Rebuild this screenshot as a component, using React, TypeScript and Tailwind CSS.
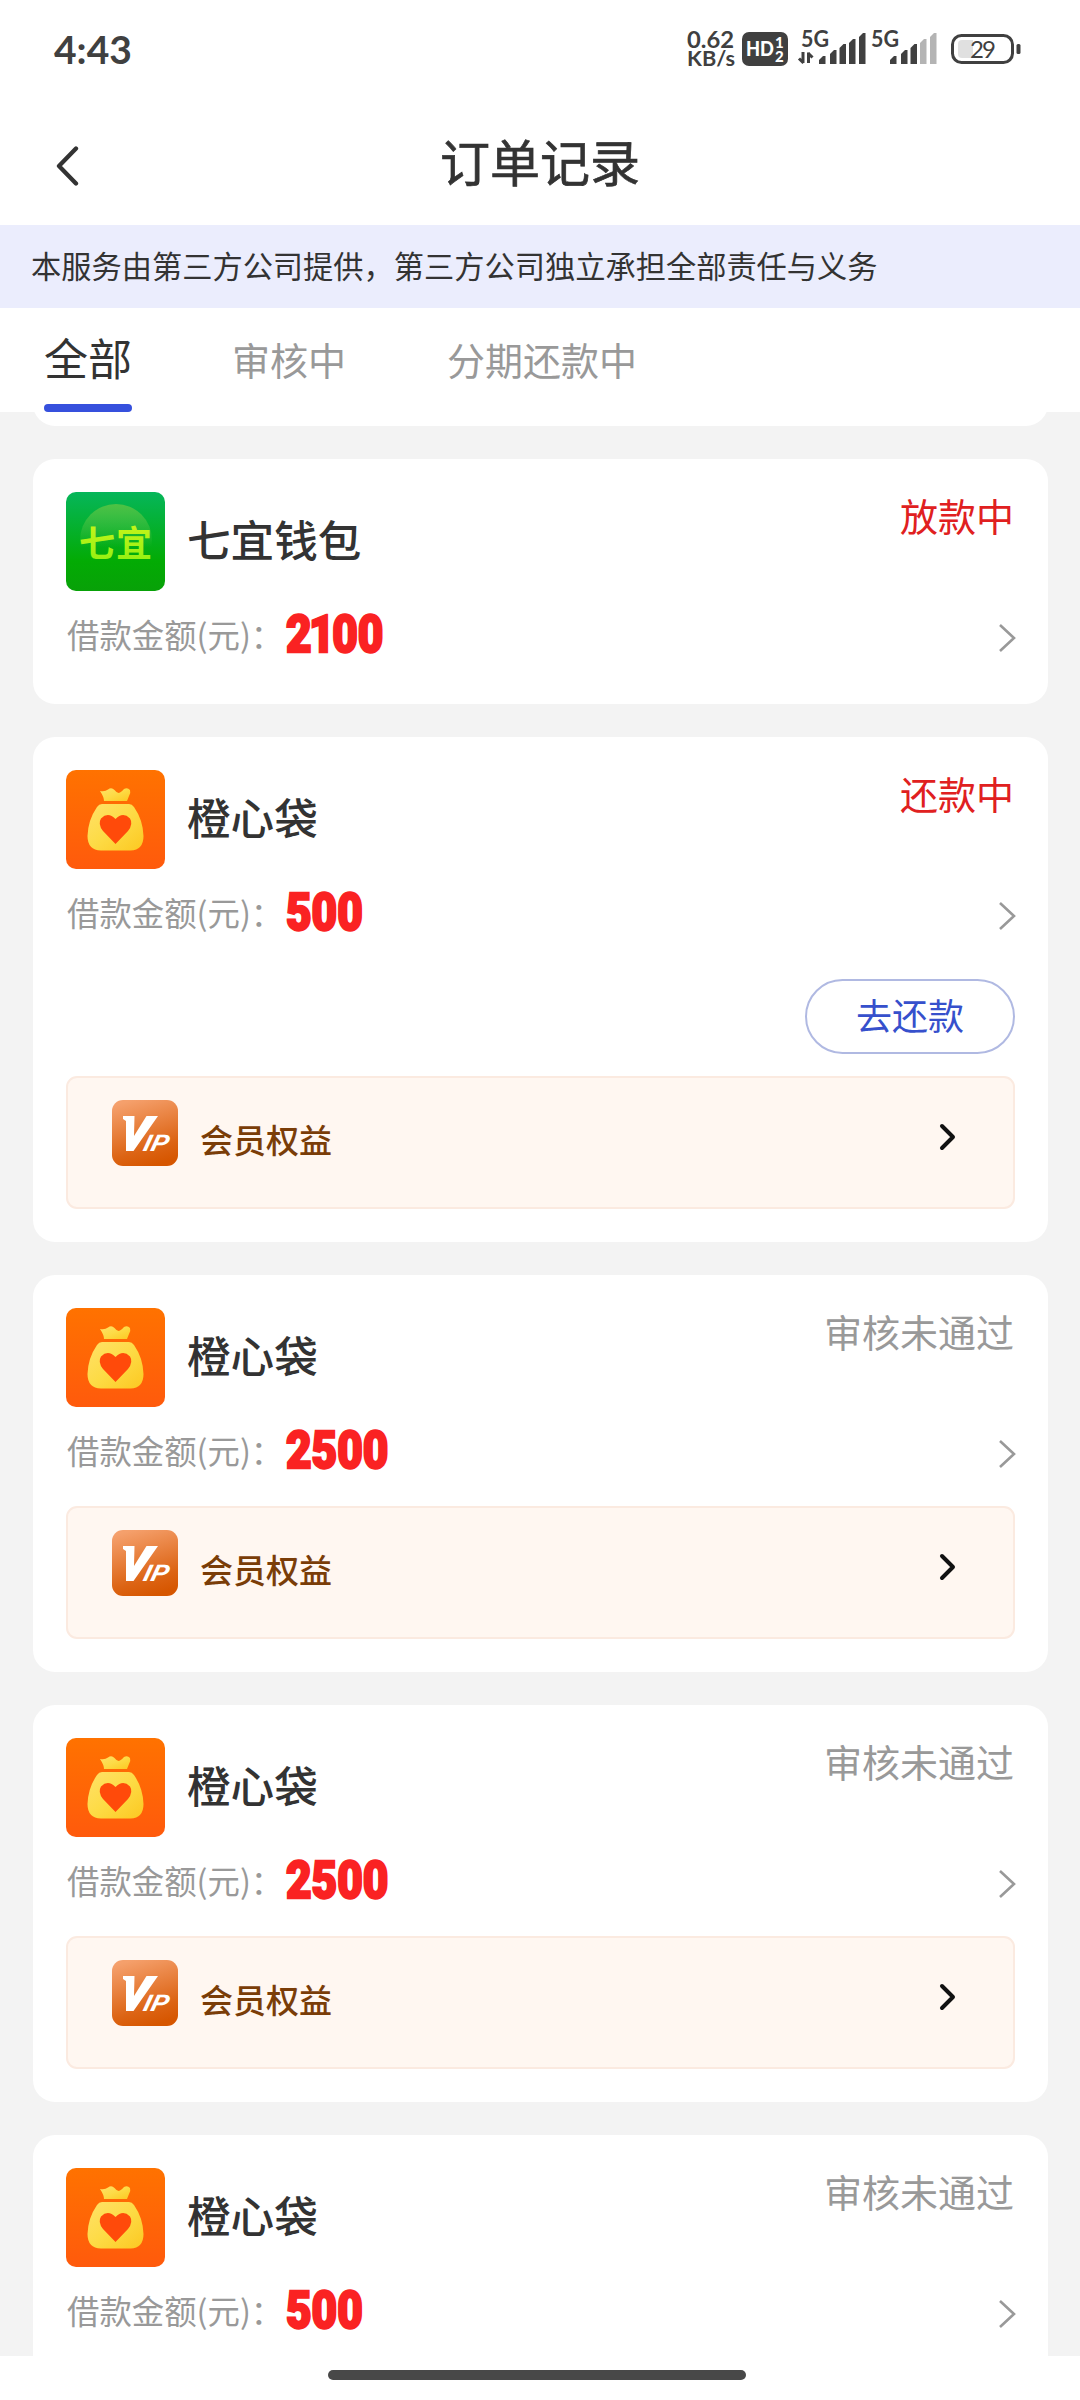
import clsx from "clsx";

type OrderStatus = "lending" | "repaying" | "rejected";

type Order = {
  id: number;
  name: string;
  logo: "qiyi" | "bag";
  amount: number;
  status: OrderStatus;
  vip?: boolean;
};

const TABS = ["全部", "审核中", "分期还款中"];

const STATUS_TEXT: Record<OrderStatus, string> = {
  lending: "放款中",
  repaying: "还款中",
  rejected: "审核未通过",
};

const orders: Order[] = [
  { id: 1, name: "七宜钱包", logo: "qiyi", amount: 2100, status: "lending" },
  { id: 2, name: "橙心袋", logo: "bag", amount: 500, status: "repaying", vip: true },
  { id: 3, name: "橙心袋", logo: "bag", amount: 2500, status: "rejected", vip: true },
  { id: 4, name: "橙心袋", logo: "bag", amount: 2500, status: "rejected", vip: true },
  { id: 5, name: "橙心袋", logo: "bag", amount: 500, status: "rejected" },
];

const SIGNAL_BARS = [
  { x: 0, top: 25 },
  { x: 11, top: 19 },
  { x: 20.5, top: 13 },
  { x: 30, top: 8 },
  { x: 40, top: 2 },
];

const Signal = ({ level, offset, arrows }: { level: number; offset: number; arrows?: boolean }) => (
  <svg className="overflow-visible" width="70" height="36" viewBox="0 0 70 36" fill="#404040">
    <text x="4" y="16" fontFamily="Lato, sans-serif" fontWeight="700" fontSize="22" textLength="28" lengthAdjust="spacingAndGlyphs">
      5G
    </text>
    {arrows && (
      <path d="M6 21v11M6.500 32L2 27.500M11.500 32V21.500M11 22l4.500 4.500" fill="none" stroke="#404040" strokeWidth="3" />
    )}
    {SIGNAL_BARS.map((bar, i) => (
      <path
        key={bar.x}
        transform={`translate(${offset + bar.x} 0)`}
        d={`M0 ${bar.top + 4}L4 ${bar.top}H6.500V33H0Z`}
        fill={i < level ? "#404040" : "#b4b4b4"}
      />
    ))}
  </svg>
);

const StatusBar = () => (
  <div className="flex h-[98px] items-center justify-between pl-[54px] pr-[59px] font-['Lato',sans-serif] text-[#404040]">
    <span className="text-[39px] font-bold leading-none">4:43</span>
    <div className="flex items-center">
      <svg className="mr-[7px] overflow-visible" width="48" height="36" viewBox="0 0 48 36" fontFamily="Lato, sans-serif" fontWeight="700" fill="#404040">
        <text x="0" y="17" fontSize="22.500" textLength="47" lengthAdjust="spacingAndGlyphs">0.62</text>
        <text x="0" y="35" fontSize="20" textLength="48" lengthAdjust="spacingAndGlyphs">KB/s</text>
      </svg>
      <svg width="46" height="34" viewBox="0 0 46 34" fontFamily="Lato, sans-serif" fontWeight="900" fill="#fff">
        <rect width="46" height="34" rx="7" fill="#404040" />
        <text x="4" y="24" fontSize="20" textLength="28" lengthAdjust="spacingAndGlyphs">HD</text>
        <text x="33" y="16" fontSize="15">1</text>
        <text x="33" y="30" fontSize="15">2</text>
      </svg>
      <div className="ml-[9px] flex">
        <Signal level={5} offset={22} arrows />
        <Signal level={3} offset={23} />
      </div>
      <svg className="ml-[14px]" width="70" height="34" viewBox="0 0 70 34">
        <rect x="1.500" y="3.500" width="60" height="27" rx="9" fill="none" stroke="#404040" strokeWidth="3" />
        <path d="M11 8h11v18H11a4 4 0 0 1-4-4V12a4 4 0 0 1 4-4z" fill="#e0e0e0" />
        <rect x="65.500" y="12" width="4" height="10" rx="1.500" fill="#404040" />
        <text x="19" y="25.500" fontFamily="Lato, sans-serif" fontSize="24" textLength="26" fill="#404040">29</text>
      </svg>
    </div>
  </div>
);

const Header = () => (
  <div className="relative flex h-[127px] items-center justify-center">
    <svg className="absolute left-[55px] top-[48px]" width="24" height="40" viewBox="0 0 24 40" fill="none">
      <path d="M21 2.500L4 20l17 17.500" stroke="#333" strokeWidth="4.300" strokeLinecap="round" strokeLinejoin="round" />
    </svg>
    <h1 className="-mt-1 text-[50px] leading-none text-[#333] [-webkit-text-stroke:0.7px_#333]">订单记录</h1>
  </div>
);

const TabBar = () => (
  <div className="flex h-[104px] items-start bg-white pl-[44px]">
    {TABS.map((tab, i) => (
      <div
        key={tab}
        className={clsx(
          "flex h-[104px] flex-col justify-between",
          i === 0 ? "text-[44px] text-[#333]" : "text-[38px] text-[#999]",
          i === 1 && "ml-[100px]",
          i === 2 && "ml-[101px]"
        )}
      >
        <span className={i === 0 ? "pt-[26px] leading-[46px]" : "pt-[28px] leading-[46px]"}>{tab}</span>
        {i === 0 && <div className="h-2 rounded-full bg-[#3650dd]" />}
      </div>
    ))}
  </div>
);

const QiyiLogo = () => (
  <svg width="99" height="99" viewBox="0 0 99 99">
    <defs>
      <linearGradient id="qiyi-bg" x1="0" y1="0" x2="0" y2="1">
        <stop offset="0" stopColor="#06b65a" />
        <stop offset="0.7" stopColor="#03ab04" />
        <stop offset="1" stopColor="#08a108" />
      </linearGradient>
      <linearGradient id="qiyi-ring" x1="0" y1="0" x2="0" y2="1">
        <stop offset="0" stopColor="#4fc244" />
        <stop offset="0.6" stopColor="#4fc244" stopOpacity="0" />
      </linearGradient>
      <linearGradient id="qiyi-text" x1="0" y1="0" x2="0" y2="1">
        <stop offset="0" stopColor="#d2f51c" />
        <stop offset="1" stopColor="#8cf010" />
      </linearGradient>
    </defs>
    <rect width="99" height="99" rx="10" fill="url(#qiyi-bg)" />
    <circle cx="50" cy="48" r="36" fill="url(#qiyi-ring)" />
    <text
      x="13"
      y="65"
      fontFamily="'Noto Sans CJK SC', sans-serif"
      fontWeight="700"
      fontSize="36"
      textLength="73"
      fill="url(#qiyi-text)"
    >
      七宜
    </text>
  </svg>
);

const BagLogo = () => (
  <svg width="99" height="99" viewBox="0 0 99 99">
    <defs>
      <linearGradient id="bag-bg" x1="0" y1="0" x2="0" y2="1">
        <stop offset="0" stopColor="#ff7200" />
        <stop offset="1" stopColor="#ff5a0c" />
      </linearGradient>
      <linearGradient id="bag-body" x1="0" y1="0" x2="1" y2="1">
        <stop offset="0" stopColor="#ffe169" />
        <stop offset="0.5" stopColor="#fddb45" />
        <stop offset="1" stopColor="#fcc821" />
      </linearGradient>
    </defs>
    <rect width="99" height="99" rx="10" fill="url(#bag-bg)" />
    <path
      d="M34 21q5 1 8-1.500 3.500-2.500 6.500 0.500 3 4 5.500 2.500 2-1 4-3.500 3.500-2 6 1 1 3-1 6l-2 5H38q0-4-4-10z"
      fill="url(#bag-body)"
    />
    <path
      d="M36 34h27q3 0 5 3 9 13 9.500 29 0 14-13 14.500H35Q21.500 80 21.500 66 22 50 31 37q2-3 5-3z"
      fill="url(#bag-body)"
    />
    <path d="M49.500 74L37 61q-5.500-7-2-12.500 7-7 14.500 0.500 7.500-7.500 14.500-0.500 3.500 5.500-2 12.500z" fill="#ff4a0a" />
  </svg>
);

const VipIcon = () => (
  <svg width="66" height="66" viewBox="0 0 66 66">
    <defs>
      <linearGradient id="vip-bg" x1="0.3" y1="0" x2="0.6" y2="1">
        <stop offset="0" stopColor="#f5a06c" />
        <stop offset="0.75" stopColor="#dc6414" />
        <stop offset="1" stopColor="#d65600" />
      </linearGradient>
    </defs>
    <rect width="66" height="66" rx="11" fill="url(#vip-bg)" />
    <path d="M11 16h11.500l-0.500 20L34.500 16H46L21.500 51H14V21l-3-2z" fill="#fff" />
    <text
      transform="translate(30 51) skewX(-14)"
      fontFamily="Roboto, sans-serif"
      fontWeight="700"
      fontStyle="italic"
      fontSize="23"
      textLength="25"
      lengthAdjust="spacingAndGlyphs"
      fill="#fff"
    >
      IP
    </text>
  </svg>
);

const VipRow = ({ className }: { className: string }) => (
  <div
    className={clsx(
      "flex h-[133px] items-start rounded-[11px] border-2 border-[#fbeae0] bg-[#fff7f1] pl-[44px] pr-[57px]",
      className
    )}
  >
    <div className="pt-[22px]">
      <VipIcon />
    </div>
    <span className="ml-[22px] mt-[43px] text-[33px] font-medium leading-[36px] text-[#7a3d08]">会员权益</span>
    <svg className="ml-auto mt-[44px]" width="18" height="30" viewBox="0 0 18 30" fill="none">
      <path d="M4 4l11 11L4 26" stroke="#111" strokeWidth="4" strokeLinecap="round" strokeLinejoin="round" />
    </svg>
  </div>
);

const OrderCard = ({ order }: { order: Order }) => (
  <div className="shrink-0 rounded-[22px] bg-white p-[33px] last:pb-20">
    <div className="flex h-[99px]">
      {order.logo === "qiyi" ? <QiyiLogo /> : <BagLogo />}
      <span className="-mt-[5px] ml-[22px] self-center text-[43.6px] font-medium leading-none text-[#333]">{order.name}</span>
      <span
        className={clsx(
          "ml-auto mr-px mt-[3px] text-[38px] leading-[40px]",
          order.status === "rejected" ? "text-[#999]" : "text-[#e02020]"
        )}
      >
        {STATUS_TEXT[order.status]}
      </span>
    </div>
    <div className="mt-[20px] flex h-[50px] items-center">
      <span className="-mt-[3px] w-[220px] whitespace-nowrap pl-px text-[32.4px] leading-none text-[#999]">借款金额(元)：</span>
      <span className="-mt-[2px] origin-left scale-x-[0.85] font-['Roboto',sans-serif] text-[52px] font-black leading-none text-[#fa2222] [-webkit-text-stroke:2.4px_#fa2222]">
        {/* the "1" sits tighter than the other digits */}
        {String(order.amount).split("").map((digit, i) => (
          <span key={i} className={digit === "1" ? "-ml-[3px] -mr-[3px]" : undefined}>
            {digit}
          </span>
        ))}
      </span>
      <svg className="-mr-px ml-auto mt-[3px]" width="18" height="30" viewBox="0 0 18 30" fill="none">
        <path d="M2 2l14 13L2 28" stroke="#999" strokeWidth="2.600" />
      </svg>
    </div>
    {order.status === "lending" && <div className="h-[10px]" />}
    {order.status === "repaying" && (
      <div className="mt-[40px] flex justify-end">
        <button className="flex h-[75px] w-[210px] items-center justify-center rounded-full border-2 border-[#b0b9e2] pb-[5px] text-[36px] leading-none text-[#3650cc]">
          去还款
        </button>
      </div>
    )}
    {order.vip && <VipRow className={order.status === "repaying" ? "mt-[22px]" : "mt-[29px]"} />}
  </div>
);

export default function App() {
  return (
    <div className="flex h-[2400px] w-[1080px] flex-col overflow-hidden bg-white font-['Noto_Sans_CJK_SC',sans-serif]">
      <StatusBar />
      <Header />
      <div className="flex h-[83px] items-center bg-[#ebedfd] pb-[3px] pl-[31px] text-[30.24px] leading-none text-[#333]">
        本服务由第三方公司提供，第三方公司独立承担全部责任与义务
      </div>
      <TabBar />
      <div className="flex h-[1944px] flex-col gap-[33px] overflow-hidden bg-[#f3f3f3] pl-[33px] pr-[32px]">
        {/* tail of the card scrolled under the tabs */}
        <div className="-mt-[40px] h-[54px] shrink-0 rounded-[22px] bg-white" />
        {orders.map((order) => (
          <OrderCard key={order.id} order={order} />
        ))}
      </div>
      <div className="flex h-[44px] pl-[328px] pt-[14px]">
        <div className="h-[10px] w-[418px] rounded-full bg-[#484848]" />
      </div>
    </div>
  );
}
